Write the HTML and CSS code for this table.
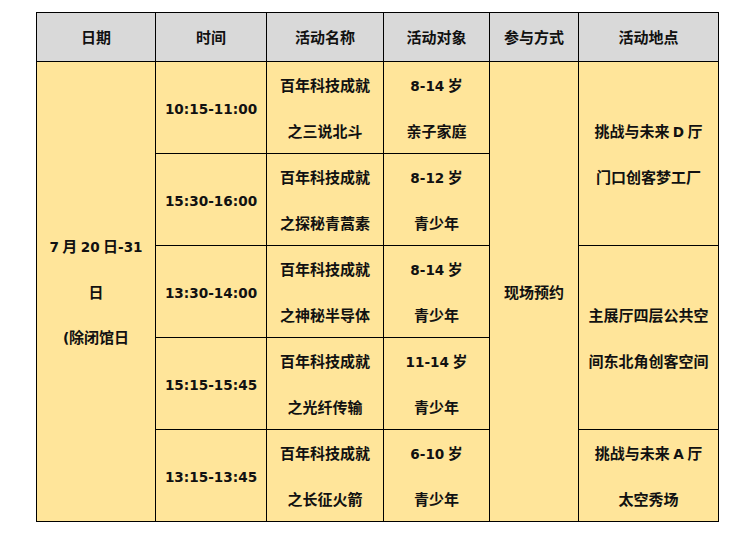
FILE: index.html
```html
<!DOCTYPE html>
<html lang="zh">
<head>
<meta charset="utf-8">
<link rel="stylesheet" href="styles.css">
</head>
<body>
<table class="sched">
  <colgroup>
    <col class="c1"><col class="c2"><col class="c3"><col class="c4"><col class="c5"><col class="c6">
  </colgroup>
  <thead>
    <tr class="head">
      <th>日期</th><th>时间</th><th>活动名称</th><th>活动对象</th><th>参与方式</th><th>活动地点</th>
    </tr>
  </thead>
  <tbody>
    <tr>
      <td rowspan="5"><span class="n">7</span> 月 <span class="n">20</span> 日<span class="n">-31</span><br>日<br><span class="n">(</span>除闭馆日</td>
      <td><span class="n">10:15-11:00</span></td>
      <td>百年科技成就<br>之三说北斗</td>
      <td><span class="n">8-14</span> 岁<br>亲子家庭</td>
      <td rowspan="5">现场预约</td>
      <td rowspan="2">挑战与未来 <span class="n">D</span> 厅<br>门口创客梦工厂</td>
    </tr>
    <tr>
      <td><span class="n">15:30-16:00</span></td>
      <td>百年科技成就<br>之探秘青蒿素</td>
      <td><span class="n">8-12</span> 岁<br>青少年</td>
    </tr>
    <tr>
      <td><span class="n">13:30-14:00</span></td>
      <td>百年科技成就<br>之神秘半导体</td>
      <td><span class="n">8-14</span> 岁<br>青少年</td>
      <td rowspan="2">主展厅四层公共空<br>间东北角创客空间</td>
    </tr>
    <tr>
      <td><span class="n">15:15-15:45</span></td>
      <td>百年科技成就<br>之光纤传输</td>
      <td><span class="n">11-14</span> 岁<br>青少年</td>
    </tr>
    <tr>
      <td><span class="n">13:15-13:45</span></td>
      <td>百年科技成就<br>之长征火箭</td>
      <td><span class="n">6-10</span> 岁<br>青少年</td>
      <td>挑战与未来 <span class="n">A</span> 厅<br>太空秀场</td>
    </tr>
  </tbody>
</table>
</body>
</html>
```
FILE: styles.css
```css
html, body {
  margin: 0;
  padding: 0;
  background: #ffffff;
}
.sched {
  margin: 12px 0 0 36px;
  border-collapse: collapse;
  table-layout: fixed;
  width: 682px;
  font-family: "Noto Sans CJK SC", sans-serif;
  font-weight: 700;
  font-size: 15px;
  color: #111;
}
.c1 { width: 119px; }
.c2 { width: 111px; }
.c3 { width: 117px; }
.c4 { width: 106px; }
.c5 { width: 89px; }
.c6 { width: 140px; }
.sched th, .sched td {
  border: 1px solid #000;
  text-align: center;
  vertical-align: middle;
  padding: 0;
  white-space: nowrap;
  overflow: hidden;
}
.sched th {
  background: #d9d9d9;
  height: 48px;
  line-height: 20px;
  font-weight: 700;
}
.sched td {
  background: #ffe59a;
  height: 90px;
  line-height: 45.5px;
}
.n {
  font-family: "DejaVu Sans", sans-serif;
  font-size: 13.6px;
  font-weight: 700;
  line-height: 0;
}
```
